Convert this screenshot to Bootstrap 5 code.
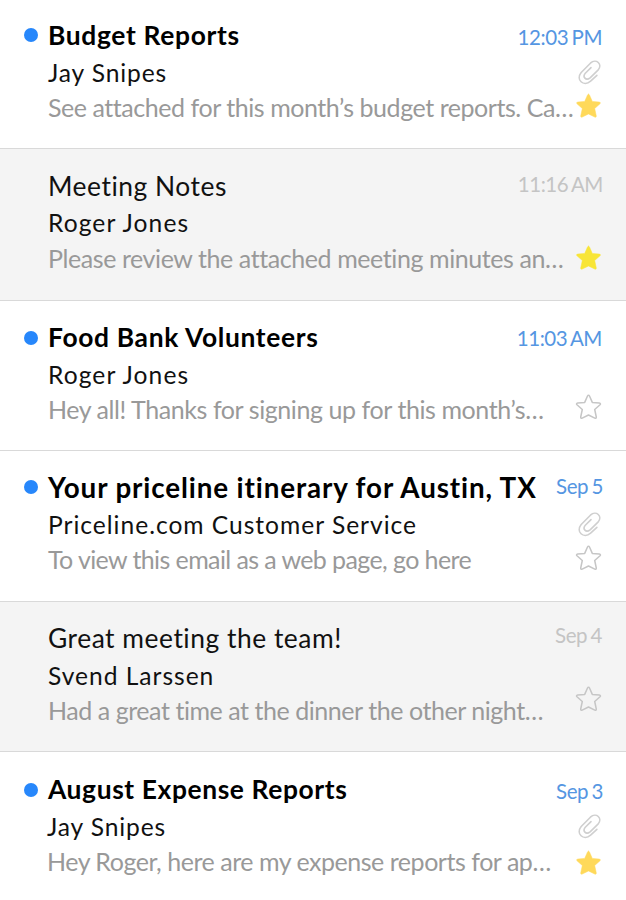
<!DOCTYPE html>
<html lang="en">
<head>
<meta charset="utf-8">
<title>Inbox</title>
<link href="https://cdn.jsdelivr.net/npm/bootstrap@5.3.0/dist/css/bootstrap.min.css" rel="stylesheet">
<style>
body{font-family:Lato,sans-serif;color:#111;background:#fff;font-variant-ligatures:none}
.mail{height:151px;border-bottom:1px solid #d9d9d9;padding:18px 23px 0 24px}
.mail-read{background:#f4f4f4}
.mail-1{height:149px;padding-top:17px}
.mail-2{height:152px}
.mail-3{height:150px}
.mail-5{height:150px}
.mail-6{border-bottom:0;padding-top:19px}
.dot{width:14px;height:14px;margin:11px 10px 0 0;border-radius:50%}
.mail-3 .dot,.mail-6 .dot{margin-top:12px}
.unread{background:#2787fb}
.line{white-space:nowrap}
.copy{width:0}
.subject{font-size:26.4px;line-height:37px;letter-spacing:.52px}
.mail-2 .subject{line-height:38px}
.mail-2 .from{line-height:36px}
.subject.fw-bold{color:#000;letter-spacing:.66px}
.mail-4 .subject.fw-bold{font-size:27.8px;letter-spacing:.87px}
.mail-6 .subject.fw-bold{letter-spacing:.6px}
.from{font-size:24.6px;line-height:37px;letter-spacing:.98px}
.mail-2 .from,.mail-3 .from{letter-spacing:1.08px}
.mail-1 .from,.mail-6 .from{letter-spacing:.88px}
.preview{font-size:25px;line-height:32px;color:#999;letter-spacing:-.42px}
.mail-1 .preview{letter-spacing:-.45px}
.mail-2 .preview{line-height:34px}
.mail-4 .preview{letter-spacing:-.6px}
.mail-5 .preview{letter-spacing:-.45px}
.mail-6 .preview{letter-spacing:-.47px}
.mail-6 .from,.mail-6 .preview{margin-left:-1px}
.when{font-size:20.5px;line-height:24px;color:#c4c4c4;letter-spacing:-.42px;word-spacing:-1.5px;white-space:nowrap;margin-top:8px}
.mail-1 .when,.mail-3 .when{margin-right:1px}
.mail-2 .when{margin-top:5px}
.mail-3 .when{margin-top:7px}
.mail-4 .when{margin-top:5px}
.mail-5 .when{margin-top:3px;margin-right:1px}
.mail-6 .when{margin-top:8px}
.mail-new .when{color:#5596e2}
.ico{width:28px;height:28px;fill:none;stroke:#c6c6c6;stroke-width:1.5;stroke-linejoin:round;stroke-linecap:round}
.clip{stroke:#cfcfcf;stroke-width:1.6;margin:9px 0 0}
.mail-4 .clip{margin-top:12px}
.star{margin-bottom:28px}
.mail-3 .star,.mail-4 .star{margin-bottom:29px}
.mail-5 .star{margin-bottom:38px}
.mail-6 .star{margin-bottom:26px}
.star.gold{fill:#ffd95a;stroke:#ffd95a;stroke-width:.5}
.star.lemon{fill:#f8e537;stroke:#f8e537;stroke-width:.5}
</style>
</head>
<body>
<svg class="d-none">
<symbol id="star" viewBox="0 0 28 28"><path d="M13.5 2.2Q14.1 2.2 14.5 3L17.3 9.4 24.3 10.1Q26.2 10.5 25 11.8L19.7 16.5 21.3 24Q21.4 25.7 19.8 25.1L13.5 22 7.2 25.1Q5.6 25.7 5.7 24L7.3 16.5 2 11.8Q.8 10.5 2.7 10.1L9.7 9.4 12.5 3Q12.9 2.2 13.5 2.2Z"/></symbol>
<symbol id="clip" viewBox="0 0 28 28"><path d="M21.9 17.4 15.6 23.2C8.5 29.2.4 21.6 6.2 14.5L15.4 5.2C21-.1 28.2 6.3 23 12.2L15.1 19.8C10.8 23.2 7.2 18.9 10.3 15.2L16 9.6"/></symbol>
</svg>
<main class="overflow-hidden">
<article class="mail mail-1 mail-new d-flex"><span class="dot unread flex-shrink-0"></span><div class="copy flex-grow-1"><div class="line subject fw-bold">Budget Reports</div><div class="line from">Jay Snipes</div><div class="line preview">See attached for this month’s budget reports. Ca…</div></div>
<div class="d-flex flex-column align-items-end"><time class="when">12:03 PM</time><svg class="ico clip"><use href="#clip"/></svg><svg class="ico star gold mt-auto"><use href="#star"/></svg></div></article>
<article class="mail mail-2 mail-read d-flex"><span class="dot flex-shrink-0"></span><div class="copy flex-grow-1"><div class="line subject">Meeting Notes</div><div class="line from">Roger Jones</div><div class="line preview">Please review the attached meeting minutes an…</div></div>
<div class="d-flex flex-column align-items-end"><time class="when">11:16 AM</time><svg class="ico star lemon mt-auto"><use href="#star"/></svg></div></article>
<article class="mail mail-3 mail-new d-flex"><span class="dot unread flex-shrink-0"></span><div class="copy flex-grow-1"><div class="line subject fw-bold">Food Bank Volunteers</div><div class="line from">Roger Jones</div><div class="line preview">Hey all! Thanks for signing up for this month’s…</div></div>
<div class="d-flex flex-column align-items-end"><time class="when">11:03 AM</time><svg class="ico star mt-auto"><use href="#star"/></svg></div></article>
<article class="mail mail-4 mail-new d-flex"><span class="dot unread flex-shrink-0"></span><div class="copy flex-grow-1"><div class="line subject fw-bold">Your priceline itinerary for Austin, TX</div><div class="line from">Priceline.com Customer Service</div><div class="line preview">To view this email as a web page, go here</div></div>
<div class="d-flex flex-column align-items-end"><time class="when">Sep 5</time><svg class="ico clip"><use href="#clip"/></svg><svg class="ico star mt-auto"><use href="#star"/></svg></div></article>
<article class="mail mail-5 mail-read d-flex"><span class="dot flex-shrink-0"></span><div class="copy flex-grow-1"><div class="line subject">Great meeting the team!</div><div class="line from">Svend Larssen</div><div class="line preview">Had a great time at the dinner the other night…</div></div>
<div class="d-flex flex-column align-items-end"><time class="when">Sep 4</time><svg class="ico star mt-auto"><use href="#star"/></svg></div></article>
<article class="mail mail-6 mail-new d-flex"><span class="dot unread flex-shrink-0"></span><div class="copy flex-grow-1"><div class="line subject fw-bold">August Expense Reports</div><div class="line from">Jay Snipes</div><div class="line preview">Hey Roger, here are my expense reports for ap…</div></div>
<div class="d-flex flex-column align-items-end"><time class="when">Sep 3</time><svg class="ico clip"><use href="#clip"/></svg><svg class="ico star gold mt-auto"><use href="#star"/></svg></div></article>
</main>
<script src="https://cdn.jsdelivr.net/npm/bootstrap@5.3.0/dist/js/bootstrap.bundle.min.js"></script>
</body>
</html>
